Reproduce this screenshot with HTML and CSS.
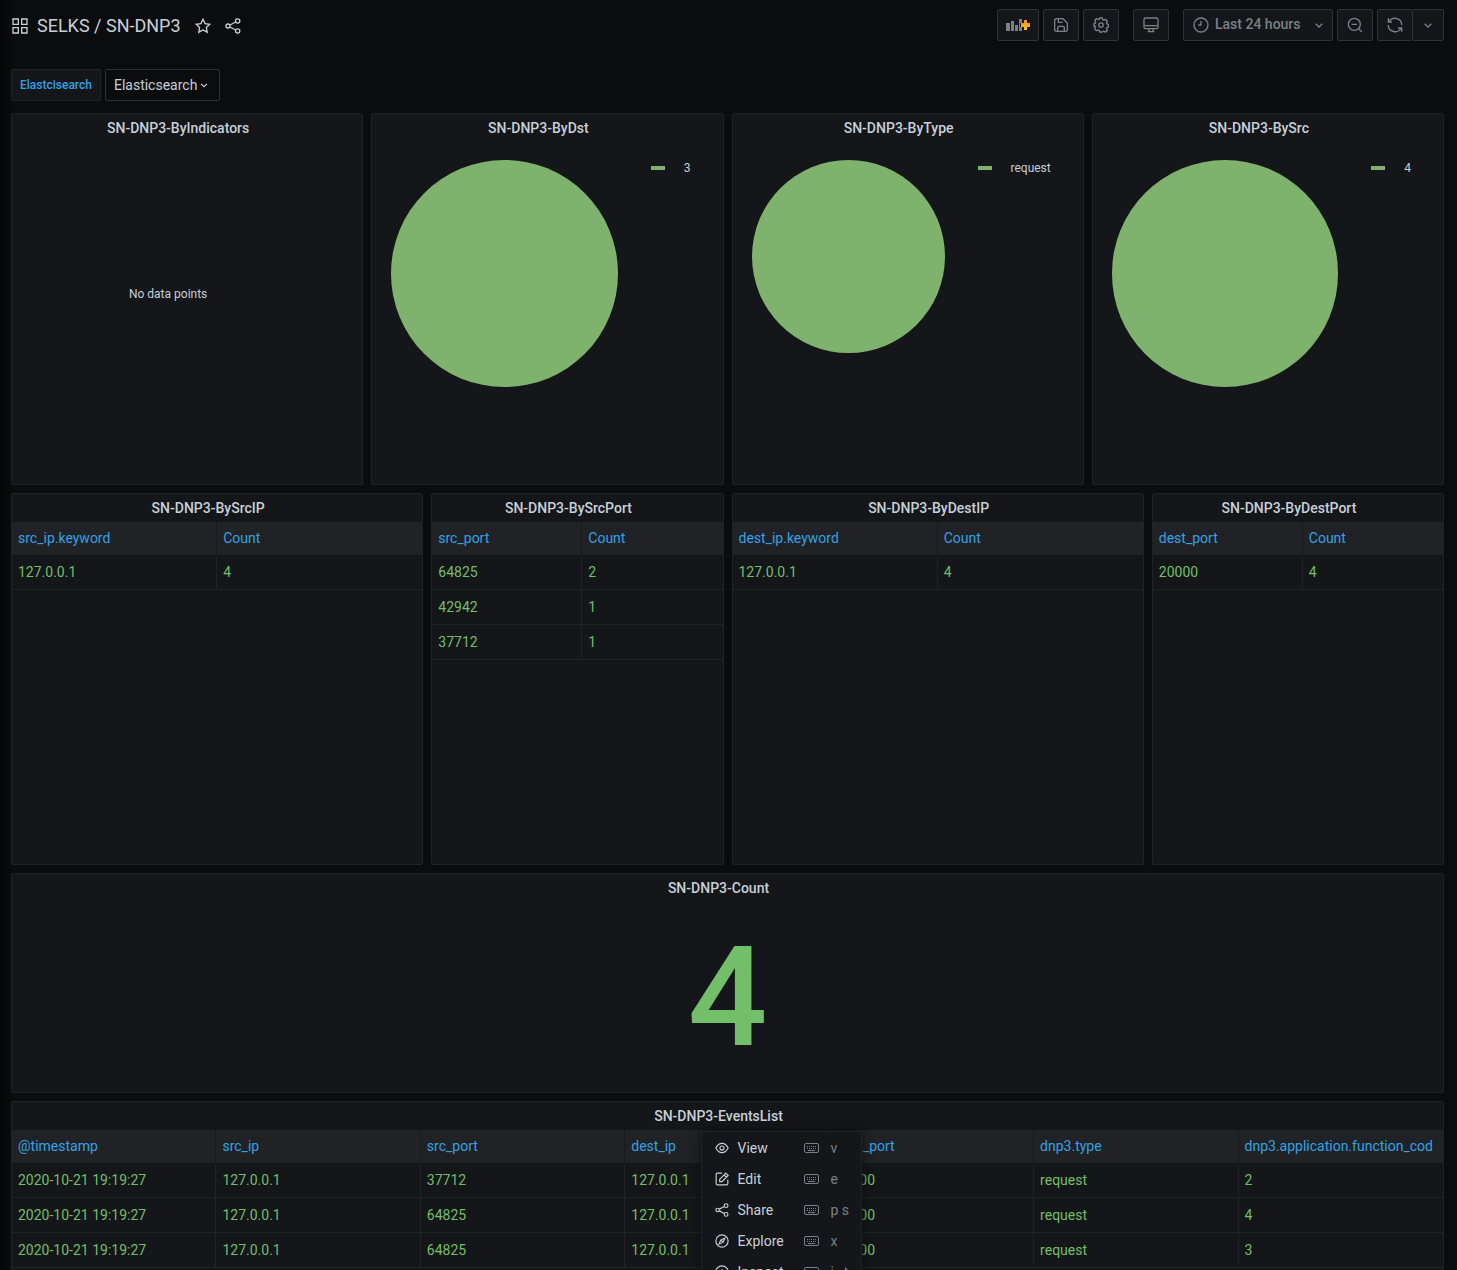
FILE: index.html
```
<!DOCTYPE html>
<html lang="en">
<head>
  <meta charset="UTF-8">
  <meta name="viewport" content="width=device-width, initial-scale=1">
  <title>SN-DNP3 - Grafana</title>
  <link rel="stylesheet" href="styles.css">
</head>
<body>

  <!-- shared icons -->
  <svg class="sprite" aria-hidden="true">
    <symbol id="i-apps" viewBox="0 0 24 24"><path d="M1.500 1.500h8v8h-8zM14.500 1.500h8v8h-8zM1.500 14.500h8v8h-8zM14.500 14.500h8v8h-8z"/></symbol>
    <symbol id="i-star" viewBox="0 0 24 24"><path d="M12 2l3.100 6.400 7 1-5 4.900 1.200 7-6.300-3.300-6.300 3.300 1.200-7-5-4.900 7-1z"/></symbol>
    <symbol id="i-share" viewBox="0 0 24 24"><circle cx="4.500" cy="12" r="3"/><circle cx="19" cy="4.500" r="3.200"/><circle cx="19" cy="19.500" r="3.200"/><path d="M7.500 10.500L16 6M7.500 13.500L16 18"/></symbol>
    <symbol id="i-save" viewBox="0 0 24 24"><path d="M2.500 5A2.500 2.500 0 0 1 5 2.500h10l6.500 6.500v10a2.500 2.500 0 0 1-2.500 2.500H5A2.500 2.500 0 0 1 2.500 19zM8 3v5h6.500M7 21v-5a2 2 0 0 1 2-2h6a2 2 0 0 1 2 2v5"/></symbol>
    <symbol id="i-cog" viewBox="0 0 24 24"><path d="M10 1.500h4l.7 2.700 1.600.7 2.500-1.400 2.800 2.800-1.400 2.500.6 1.500 2.200.8v4l-2.300.8-.6 1.500 1.400 2.500-2.800 2.700-2.500-1.300-1.500.6L14 22.500h-4l-.8-2.600-1.500-.6-2.500 1.300-2.800-2.700 1.400-2.500-.6-1.500L1.500 14v-4l1.900-.8.6-1.500-1.400-2.500 2.700-2.800 2.500 1.400 1.500-.6z"/><circle cx="12" cy="12" r="3.300"/></symbol>
    <symbol id="i-monitor" viewBox="0 0 24 24"><rect x="1.500" y="1.500" width="21" height="16" rx="2.500"/><path d="M2 13h20M9 17v4M15 17v4M7 22h10"/></symbol>
    <symbol id="i-clock" viewBox="0 0 24 24"><circle cx="12" cy="12" r="10.500"/><path d="M12 6v6H8"/></symbol>
    <symbol id="i-down" viewBox="0 0 24 24"><path d="M7 10l5 5 5-5"/></symbol>
    <symbol id="i-zoom-out" viewBox="0 0 24 24"><circle cx="11" cy="11" r="9"/><path d="M17.500 17.500l5 5M7 11h8"/></symbol>
    <symbol id="i-sync" viewBox="0 0 24 24"><path d="M2 2v5.500h5.500M2.800 7.500A10.300 10.300 0 0 1 22.200 12M22 22v-5.500h-5.500M21.200 16.500A10.300 10.300 0 0 1 1.800 12"/></symbol>
    <symbol id="i-eye" viewBox="0 0 24 24"><path d="M1.500 12C4 7 7.500 4 12 4s8 3 10.500 8c-2.500 5-6 8-10.500 8S4 17 1.500 12z"/><circle cx="12" cy="12" r="3.500"/></symbol>
    <symbol id="i-edit" viewBox="0 0 24 24"><path d="M12 2H4a2 2 0 0 0-2 2v16a2 2 0 0 0 2 2h16a2 2 0 0 0 2-2v-7M8 12.500L18.500 2l4 4L12 16.500H8zM15.500 5l4 4"/></symbol>
    <symbol id="i-compass" viewBox="0 0 24 24"><circle cx="12" cy="12" r="10.500"/><path d="M17 7l-3 7-7 3 3-7zM10.500 10.500l3 3"/></symbol>
    <symbol id="i-info" viewBox="0 0 24 24"><circle cx="12" cy="12" r="10.500"/><path d="M12 11v6M12 7v1"/></symbol>
    <symbol id="i-keyboard" viewBox="0 0 15 10"><rect x="0.500" y="0.500" width="14" height="9" rx="1.500"/><path d="M3 3.500h1M5 3.500h1M7 3.500h1M9 3.500h1M11 3.500h1M3 5.500h1M5 5.500h1M7 5.500h1M9 5.500h1M11 5.500h1M4 7.500h7"/></symbol>
  </svg>

  <header class="navbar">
    <div class="navbar-title">
      <svg class="icon"><use href="#i-apps"/></svg>
      <h1><a href="#">SELKS</a> / <a href="#">SN-DNP3</a></h1>
      <button class="btn-plain" aria-label="Mark as favorite"><svg class="icon"><use href="#i-star"/></svg></button>
      <button class="btn-plain" aria-label="Share dashboard"><svg class="icon"><use href="#i-share"/></svg></button>
    </div>

    <div class="navbar-group">
      <button class="btn btn-add" aria-label="Add panel">
        <svg class="icon-add" viewBox="0 0 24 14">
          <g fill="#7b8087">
            <rect x="0" y="5" width="4" height="8"/>
            <rect x="5" y="3" width="3" height="10"/>
            <rect x="9" y="7" width="3" height="6"/>
            <path d="M13 1h3v4h-2v4h2v4h-3z"/>
          </g>
          <path d="M18 2h3v3h3v4h-3v3h-3V9h-3V5h3z" fill="url(#plus)"/>
          <defs>
            <linearGradient id="plus" x1="0" y1="0" x2="0" y2="1">
              <stop offset="0" stop-color="#f2852b"/>
              <stop offset="1" stop-color="#fbca0a"/>
            </linearGradient>
          </defs>
        </svg>
      </button>
      <button class="btn" aria-label="Save dashboard"><svg class="icon"><use href="#i-save"/></svg></button>
      <button class="btn" aria-label="Dashboard settings"><svg class="icon"><use href="#i-cog"/></svg></button>
    </div>
    <button class="btn" aria-label="Cycle view mode"><svg class="icon"><use href="#i-monitor"/></svg></button>
    <div class="navbar-group">
      <button class="btn btn-time">
        <svg class="icon"><use href="#i-clock"/></svg>
        <span>Last 24 hours</span>
        <svg class="icon"><use href="#i-down"/></svg>
      </button>
      <button class="btn" aria-label="Zoom out"><svg class="icon"><use href="#i-zoom-out"/></svg></button>
      <div class="btn-split">
        <button class="btn" aria-label="Refresh"><svg class="icon"><use href="#i-sync"/></svg></button>
        <button class="btn btn-caret" aria-label="Refresh interval"><svg class="icon"><use href="#i-down"/></svg></button>
      </div>
    </div>
  </header>

  <div class="submenu">
    <span class="var-label" id="ds-label">Elastcisearch</span>
    <button class="var-value" aria-labelledby="ds-label ds-value">
      <span id="ds-value">Elasticsearch</span>
      <svg class="icon"><use href="#i-down"/></svg>
    </button>
  </div>

  <main class="grid">

    <section class="panel tall w6">
      <h2>SN-DNP3-ByIndicators</h2>
      <div class="no-data">No data points</div>
    </section>

    <section class="panel tall w6">
      <h2>SN-DNP3-ByDst</h2>
      <div class="pie-chart">
        <div class="pie"></div>
        <div class="legend"><i></i>3</div>
      </div>
    </section>

    <section class="panel tall w6">
      <h2>SN-DNP3-ByType</h2>
      <div class="pie-chart">
        <div class="pie"></div>
        <div class="legend"><i></i>request</div>
      </div>
    </section>

    <section class="panel tall w6">
      <h2>SN-DNP3-BySrc</h2>
      <div class="pie-chart">
        <div class="pie"></div>
        <div class="legend"><i></i>4</div>
      </div>
    </section>

    <section class="panel tall w7">
      <h2>SN-DNP3-BySrcIP</h2>
      <table>
        <thead><tr><th>src_ip.keyword</th><th>Count</th></tr></thead>
        <tbody>
          <tr><td>127.0.0.1</td><td>4</td></tr>
        </tbody>
      </table>
    </section>

    <section class="panel tall w5">
      <h2>SN-DNP3-BySrcPort</h2>
      <table class="ports">
        <thead><tr><th>src_port</th><th>Count</th></tr></thead>
        <tbody>
          <tr><td>64825</td><td>2</td></tr>
          <tr><td>42942</td><td>1</td></tr>
          <tr><td>37712</td><td>1</td></tr>
        </tbody>
      </table>
    </section>

    <section class="panel tall w7">
      <h2>SN-DNP3-ByDestIP</h2>
      <table>
        <thead><tr><th>dest_ip.keyword</th><th>Count</th></tr></thead>
        <tbody>
          <tr><td>127.0.0.1</td><td>4</td></tr>
        </tbody>
      </table>
    </section>

    <section class="panel tall w5">
      <h2>SN-DNP3-ByDestPort</h2>
      <table class="ports">
        <thead><tr><th>dest_port</th><th>Count</th></tr></thead>
        <tbody>
          <tr><td>20000</td><td>4</td></tr>
        </tbody>
      </table>
    </section>

    <section class="panel short w24">
      <h2>SN-DNP3-Count</h2>
      <div class="stat">4</div>
    </section>

    <section class="panel tall w24">
      <h2>SN-DNP3-EventsList</h2>
      <table>
        <thead>
          <tr>
            <th>@timestamp</th>
            <th>src_ip</th>
            <th>src_port</th>
            <th>dest_ip</th>
            <th>dest_port</th>
            <th>dnp3.type</th>
            <th>dnp3.application.function_cod</th>
          </tr>
        </thead>
        <tbody>
          <tr><td>2020-10-21 19:19:27</td><td>127.0.0.1</td><td>37712</td><td>127.0.0.1</td><td>20000</td><td>request</td><td>2</td></tr>
          <tr><td>2020-10-21 19:19:27</td><td>127.0.0.1</td><td>64825</td><td>127.0.0.1</td><td>20000</td><td>request</td><td>4</td></tr>
          <tr><td>2020-10-21 19:19:27</td><td>127.0.0.1</td><td>64825</td><td>127.0.0.1</td><td>20000</td><td>request</td><td>3</td></tr>
        </tbody>
      </table>

      <ul class="menu">
        <li><a href="#"><svg class="icon"><use href="#i-eye"/></svg><span>View</span><svg class="kbd"><use href="#i-keyboard"/></svg><em>v</em></a></li>
        <li><a href="#"><svg class="icon"><use href="#i-edit"/></svg><span>Edit</span><svg class="kbd"><use href="#i-keyboard"/></svg><em>e</em></a></li>
        <li><a href="#"><svg class="icon"><use href="#i-share"/></svg><span>Share</span><svg class="kbd"><use href="#i-keyboard"/></svg><em>p s</em></a></li>
        <li><a href="#"><svg class="icon"><use href="#i-compass"/></svg><span>Explore</span><svg class="kbd"><use href="#i-keyboard"/></svg><em>x</em></a></li>
        <li><a href="#" class="has-submenu"><svg class="icon"><use href="#i-info"/></svg><span>Inspect</span><svg class="kbd"><use href="#i-keyboard"/></svg><em>i</em></a></li>
      </ul>
    </section>

  </main>

</body>
</html>
```

FILE: styles.css
```
* {
  box-sizing: border-box;
}

body {
  height: 100vh;
  margin: 0;
  padding: 0 13px 0 11px;
  overflow-x: hidden;
  overflow-y: auto;
  scrollbar-width: none;
  background: linear-gradient(to right, #050506, #0b0c0e 12px);
  color: #c7d0d9;
  font-family: Roboto, "Liberation Sans", sans-serif;
  font-size: 14px;
  line-height: 20px;
}

a {
  color: inherit;
  text-decoration: none;
}

button {
  font: inherit;
  color: inherit;
  cursor: pointer;
}

.sprite {
  position: absolute;
  width: 0;
  height: 0;
}

.icon {
  flex: none;
  width: 16px;
  height: 16px;
  fill: none;
  stroke: currentColor;
  stroke-width: 2;
}

/* navbar */
.navbar {
  display: flex;
  align-items: center;
  gap: 14px;
  height: 50px;
}

.navbar-title {
  display: flex;
  flex: 1;
  align-items: center;
  padding-top: 1px;
}

.navbar-title > .icon {
  margin: 0 9px 0 1px;
}

.navbar h1 {
  margin: 0 7px 0 0;
  font-size: 18px;
  font-weight: 400;
}

.btn-plain {
  display: flex;
  padding: 0 7px;
  border: 0;
  background: none;
}

.navbar-group {
  display: flex;
  gap: 4px;
}

.btn {
  display: flex;
  align-items: center;
  justify-content: center;
  width: 36px;
  height: 32px;
  padding: 0;
  border: 1px solid #2c3235;
  border-radius: 2px;
  background: #141619;
  color: #7b8087;
}

.btn-add {
  width: 42px;
}

.icon-add {
  width: 24px;
  height: 14px;
}

.btn-time {
  gap: 6px;
  width: 150px;
  padding: 0 5px 0 9px;
  font-weight: 500;
}

.btn-time span {
  flex: 1;
  padding-bottom: 2px;
  text-align: left;
}

.btn-split {
  display: flex;
}

.btn-caret {
  width: 32px;
  margin-left: -1px;
}

/* template variables */
.submenu {
  display: flex;
  gap: 4px;
  margin: 19px 0 12px;
}

.var-label {
  height: 32px;
  padding: 0 8px;
  border: 1px solid #202226;
  border-radius: 2px;
  background: #141619;
  color: #33a2e5;
  font-size: 12px;
  font-weight: 500;
  line-height: 30px;
}

.var-value {
  display: flex;
  align-items: center;
  height: 32px;
  padding: 0 8px;
  border: 1px solid #2c3235;
  border-radius: 2px;
  background: #0b0c0e;
}

.var-value .icon {
  width: 14px;
  height: 14px;
}

/* panels */
.grid {
  display: grid;
  grid-template-columns: repeat(24, 1fr);
  gap: 8px;
}

.w5 { grid-column: span 5; }
.w6 { grid-column: span 6; }
.w7 { grid-column: span 7; }
.w24 { grid-column: span 24; }

.panel {
  position: relative;
  display: flex;
  flex-direction: column;
  min-width: 0;
  border: 1px solid #202226;
  border-radius: 2px;
  background: #141619;
}

.tall { min-height: 372px; }
.short { min-height: 220px; }

.panel h2 {
  margin: 0;
  padding-right: 18px;
  font-size: 14px;
  font-weight: 500;
  line-height: 28px;
  text-align: center;
}

.no-data {
  display: flex;
  flex: 1;
  align-items: center;
  justify-content: center;
  padding: 0 38px 38px 0;
  font-size: 12px;
}

.pie-chart {
  display: flex;
  align-items: flex-start;
  gap: 33px;
  padding: 18px 32px 0 19px;
}

.pie {
  flex: 1;
  aspect-ratio: 1;
  border-radius: 50%;
  background: #7eb26d;
}

.legend {
  display: flex;
  align-items: center;
  gap: 19px;
  font-size: 12px;
  line-height: 16px;
}

.legend i {
  width: 14px;
  height: 4px;
  background: #7eb26d;
}

.stat {
  display: flex;
  flex: 1;
  align-items: center;
  justify-content: center;
  color: #73bf69;
  font-size: 140px;
  font-weight: 500;
  line-height: 160px;
}

/* tables */
table {
  width: 100%;
  border-collapse: separate;
  border-spacing: 0;
  table-layout: fixed;
}

th,
td {
  overflow: hidden;
  padding: 0 6px;
  border-right: 1px solid #202226;
  font-weight: 400;
  text-align: left;
  white-space: nowrap;
}

th {
  height: 33px;
  padding-bottom: 2px;
  border-right-color: #17191c;
  background: #202226;
  color: #33a2e5;
}

td {
  height: 35px;
  border-bottom: 1px solid #202226;
  color: #73bf69;
}

th:last-child,
td:last-child {
  border-right: 0;
}

.ports th:first-child {
  width: 150px;
}

/* panel menu */
.menu {
  position: absolute;
  top: 29px;
  left: calc(50% - 27px);
  width: 161px;
  margin: 0;
  padding: 0;
  border: 1px solid #202226;
  background: #141619;
  box-shadow: 0 0 8px #0b0c0e;
  list-style: none;
}

.menu a {
  display: flex;
  align-items: center;
  height: 31px;
  padding: 0 11px 0 13px;
}

.menu .icon {
  width: 14px;
  height: 14px;
}

.menu span {
  width: 66px;
  margin-left: 9px;
}

.menu em {
  margin-left: 12px;
  color: #7b8087;
  font-style: normal;
}

.menu .has-submenu::after {
  content: "";
  margin-left: auto;
  border: 5px solid transparent;
  border-left-color: #7b8087;
  border-right-width: 0;
}

.kbd {
  width: 15px;
  height: 10px;
  fill: none;
  stroke: #7b8087;
}
```
